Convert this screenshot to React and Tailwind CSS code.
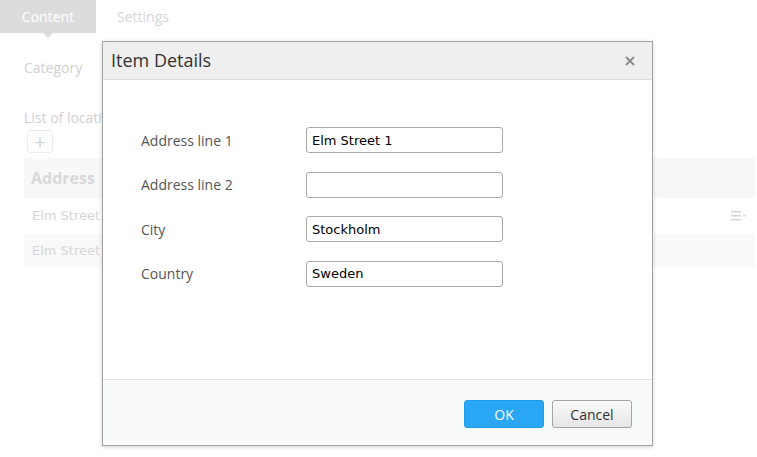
import React from 'react';

const FIELDS = [
  { label: 'Address line 1', value: 'Elm Street 1' },
  { label: 'Address line 2', value: '' },
  { label: 'City', value: 'Stockholm' },
  { label: 'Country', value: 'Sweden' },
];

const sans = { fontFamily: '"Open Sans", "Noto Sans", sans-serif' };
const mono = { fontFamily: '"DejaVu Sans", Verdana, sans-serif' };

export default function App() {
  return (
    <div className="relative w-[757px] h-[457px] overflow-hidden bg-white" style={sans}>
      {/* Page behind the dialog, shown dimmed */}
      <div className="flex h-[33px] text-[14px]">
        <div className="relative w-[96px] bg-[#dcdcdc] text-white flex items-center justify-center">
          Content
          <span className="absolute left-[43px] -bottom-[5px] w-0 h-0 border-l-[5px] border-r-[5px] border-t-[5px] border-l-transparent border-r-transparent border-t-[#dcdcdc]" />
        </div>
        <div className="px-[21px] flex items-center text-[#d6d6d6]">Settings</div>
      </div>

      <div className="px-[24px]">
        <div className="mt-[24px] text-[14px] text-[#d0d0d0]">Category</div>
        <div className="mt-[29px] text-[14px] text-[#d0d0d0]">List of locations</div>
        <div className="mt-[2px] ml-[3px] w-[26px] h-[23px] border border-[#ececec] rounded-[3px] flex items-center justify-center text-[#d0d0d0] text-[20px] leading-none">+</div>

        <div className="mt-[5px] w-[731px]">
          <div className="h-[40px] bg-[#f8f8f8] flex items-center px-[7px] text-[16px] font-bold text-[#d8d8d8]">Address</div>
          <div className="h-[36px] flex items-center justify-between px-[8px] text-[13px] text-[#d6d6d6]" style={mono}>
            <span>Elm Street 1</span>
            <svg width="16" height="10" viewBox="0 0 16 10">
              <rect x="0" y="0" width="10" height="1.5" fill="#d5d5d5" />
              <rect x="0" y="4" width="10" height="1.5" fill="#d5d5d5" />
              <rect x="0" y="8" width="10" height="1.5" fill="#d5d5d5" />
              <path d="M11.5 4 L15 4 L13.25 6 Z" fill="#d5d5d5" />
            </svg>
          </div>
          <div className="h-[33px] bg-[#f9f9f9] flex items-center px-[8px] text-[13px] text-[#d6d6d6]" style={mono}>
            Elm Street 2
          </div>
        </div>
      </div>

      {/* Item details dialog */}
      <div className="absolute left-[102px] top-[41px] w-[551px] h-[405px] bg-white border border-[#a3a3a3] shadow-[0_1px_4px_rgba(0,0,0,0.18)] flex flex-col">
        <div className="h-[38px] shrink-0 bg-[#efefef] border-b border-[#dedede] flex items-center justify-between pl-[8px] pr-[17px]">
          <span className="text-[18px] text-[#333]">Item Details</span>
          <svg width="10" height="10" viewBox="0 0 10 10">
            <path d="M1 1 L9 9 M9 1 L1 9" stroke="#8a8a8a" strokeWidth="1.8" />
          </svg>
        </div>

        <div className="flex-1 pt-[47px] pl-[38px] flex flex-col gap-[18.6px]">
          {FIELDS.map(f => (
            <div key={f.label} className="flex items-center h-[26px]">
              <label className="w-[165px] text-[14px] text-[#555]">{f.label}</label>
              <input
                type="text"
                defaultValue={f.value}
                className="w-[197px] h-[26px] border border-[#a9a9a9] rounded-[3px] px-[5px] text-[13px] text-black outline-none"
                style={mono}
              />
            </div>
          ))}
        </div>

        <div className="h-[66px] shrink-0 bg-[#f8f9f9] border-t border-[#e3e3e3] flex items-start justify-end gap-[8px] pt-[20px] pr-[20px]">
          <button className="w-[80px] h-[28px] rounded-[3px] bg-[#29a7f5] border border-[#1d9de9] text-white text-[14px]">OK</button>
          <button className="w-[80px] h-[28px] rounded-[3px] bg-gradient-to-b from-[#fafafa] to-[#e6e6e6] border border-[#a5a5a5] text-[#333] text-[14px]">Cancel</button>
        </div>
      </div>
    </div>
  );
}
